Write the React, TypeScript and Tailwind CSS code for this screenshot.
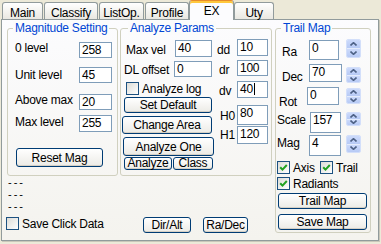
import type { ReactNode } from "react";

function Field({ value, className, caret }: { value: string; className: string; caret?: boolean }) {
  return (
    <div className={`flex items-start border border-[#7f9db9] bg-white pl-[2px] leading-[14px] shrink-0 ${className}`}>
      {value}
      {caret && <span className="ml-[1px] mt-[1px] w-px h-[12px] bg-black" />}
    </div>
  );
}

function Btn({ label, className }: { label: string; className: string }) {
  return (
    <button
      type="button"
      className={`flex items-center justify-center border border-[#003c74] rounded-[3px] bg-linear-to-b from-white to-[#ecebe6] shadow-[inset_0_-1px_0_#d6d0c5] shrink-0 whitespace-nowrap ${className}`}
    >
      {label}
    </button>
  );
}

function Check({ checked }: { checked?: boolean }) {
  return (
    <span className="flex items-center justify-center w-[13px] h-[13px] border border-[#1c5180] bg-linear-to-br from-[#dcdcd7] to-white shrink-0">
      {checked && (
        <svg width="9" height="9" viewBox="0 0 9 9">
          <path d="M1.2 4.2 L3.5 6.6 L7.8 2" stroke="#21a121" strokeWidth="2" fill="none" />
        </svg>
      )}
    </span>
  );
}

function Spin({ className }: { className: string }) {
  return (
    <div className={`w-[15px] flex flex-col rounded-[2px] overflow-hidden border border-[#d3dffa] shrink-0 ${className}`}>
      <div className="flex-1 flex items-center justify-center bg-linear-to-b from-[#ccdafb] to-[#b7caf5] border-b border-[#e4ecfc]">
        <svg width="7" height="4" viewBox="0 0 7 4">
          <path d="M0.5 3.5 L3.5 0.7 L6.5 3.5" stroke="#4d6185" strokeWidth="1.6" fill="none" />
        </svg>
      </div>
      <div className="flex-1 flex items-center justify-center bg-linear-to-b from-[#ccdafb] to-[#b7caf5]">
        <svg width="7" height="4" viewBox="0 0 7 4">
          <path d="M0.5 0.5 L3.5 3.3 L6.5 0.5" stroke="#4d6185" strokeWidth="1.6" fill="none" />
        </svg>
      </div>
    </div>
  );
}

function Group({ title, titleLeft, className, children }: { title: string; titleLeft: string; className: string; children: ReactNode }) {
  return (
    <div className={`relative border border-[#d0d0bf] rounded-[3px] ${className}`}>
      <span className={`absolute -top-[8px] ${titleLeft} px-[2px] bg-[#fbfbfb] text-[#0046d5] whitespace-nowrap`}>{title}</span>
      {children}
    </div>
  );
}

function Tab({ label, className }: { label: string; className: string }) {
  return (
    <div
      className={`flex justify-center pt-[3px] h-[17px] border-t border-l border-r border-[#919b9c] rounded-t-[3px] bg-linear-to-b from-white to-[#e9e8e1] ${className}`}
    >
      {label}
    </div>
  );
}

export default function App() {
  return (
    <div className="w-[381px] h-[244px] overflow-hidden bg-[#ece9d8] text-black text-[12px] leading-[14px] tracking-[-0.25px] font-['Liberation_Sans',Arial,sans-serif]">
      {/* tab strip */}
      <div className="flex items-end h-[19px]">
        <Tab label="Main" className="ml-[2px] w-[41px]" />
        <Tab label="Classify" className="ml-[1px] w-[54px]" />
        <Tab label="ListOp." className="ml-[1px] w-[45px]" />
        <Tab label="Profile" className="ml-[1px] w-[44px]" />
        <div className="relative z-10 flex justify-center pt-[3px] w-[45px] h-[20px] -mb-[1px] border-t border-l border-r border-t-[#e68b2c] border-[#919b9c] rounded-t-[3px] bg-[#fcfcfe] shadow-[inset_0_2px_0_#ffc83c]">
          EX
        </div>
        <Tab label="Uty" className="w-[40px]" />
      </div>

      {/* tab page */}
      <div className="ml-[1px] w-[378px] h-[222px] border border-[#919b9c] bg-linear-to-b from-[#fcfcfe] to-[#f4f3ee] shadow-[1px_1px_0_#c9c7ba] flex pl-[5px] pt-[8px]">
        {/* left column */}
        <div className="w-[111px] flex flex-col">
          <Group title="Magnitude Setting" titleLeft="left-[5px]" className="h-[148px] flex flex-col pl-[7px] pt-[13px]">
            <div className="flex items-start h-[16px]">
              <span className="w-[64px] -mt-[1px]">0 level</span>
              <Field value="258" className="w-[33px] h-[16px]" />
            </div>
            <div className="flex items-start h-[16px] mt-[9px]">
              <span className="w-[64px] mt-[1px]">Unit level</span>
              <Field value="45" className="w-[33px] h-[16px]" />
            </div>
            <div className="flex items-start h-[16px] mt-[11px]">
              <span className="w-[64px] -mt-[1px]">Above max</span>
              <Field value="20" className="w-[33px] h-[16px]" />
            </div>
            <div className="flex items-start h-[17px] mt-[5px]">
              <span className="w-[64px]">Max level</span>
              <Field value="255" className="w-[33px] h-[17px]" />
            </div>
            <Btn label="Reset Mag" className="mt-[16px] ml-[1px] w-[87px] h-[19px]" />
          </Group>
          <div className="pl-[1px] text-[11px] leading-[12px] tracking-[2px]">
            <div className="h-[12px]">---</div>
            <div className="h-[12px]">---</div>
            <div className="h-[12px]">---</div>
          </div>
          <div className="flex items-center h-[13px] mt-[5px] -ml-[1px]">
            <Check />
            <span className="ml-[3px] whitespace-nowrap">Save Click Data</span>
          </div>
        </div>

        {/* middle column */}
        <div className="ml-[2px] w-[152px] flex flex-col">
          <Group title="Analyze Params" titleLeft="left-[7px]" className="h-[148px] flex pl-[1px]">
            <div className="w-[92px] flex flex-col pt-[11px]">
              <div className="flex items-start h-[17px]">
                <span className="w-[53px] pl-[4px] mt-[3px]">Max vel</span>
                <Field value="40" className="w-[37px] h-[17px]" />
              </div>
              <div className="flex items-start h-[16px] mt-[4px]">
                <span className="w-[52px] pl-[2px] mt-[2px] whitespace-nowrap">DL offset</span>
                <Field value="0" className="w-[38px] h-[16px]" />
              </div>
              <div className="flex items-center h-[13px] mt-[5px] pl-[4px]">
                <Check />
                <span className="ml-[3px] whitespace-nowrap">Analyze log</span>
              </div>
              <Btn label="Set Default" className="mt-[2px] ml-[2px] w-[88px] h-[16px]" />
              <Btn label="Change Area" className="mt-[3px] w-[90px] h-[18px]" />
              <Btn label="Analyze One" className="mt-[3px] ml-[1px] w-[91px] h-[19px]" />
              <div className="flex mt-[1px]">
                <Btn label="Analyze" className="ml-[2px] w-[48px] h-[13px] leading-[11px]" />
                <Btn label="Class" className="ml-[1px] w-[40px] h-[13px] leading-[11px]" />
              </div>
            </div>
            <div className="w-[54px] flex flex-col pt-[10px]">
              <div className="flex items-start h-[17px]">
                <span className="w-[23px] pl-[3px] mt-[4px]">dd</span>
                <Field value="10" className="w-[31px] h-[17px]" />
              </div>
              <div className="flex items-start h-[16px] mt-[4px]">
                <span className="w-[23px] pl-[5px] mt-[3px]">dr</span>
                <Field value="100" className="w-[31px] h-[16px]" />
              </div>
              <div className="flex items-start h-[17px] mt-[5px]">
                <span className="w-[23px] pl-[5px] mt-[3px]">dv</span>
                <Field value="40" caret className="w-[31px] h-[17px]" />
              </div>
              <div className="flex items-start h-[20px] mt-[7px]">
                <span className="w-[23px] pl-[6px] mt-[4px]">H0</span>
                <Field value="80" className="w-[31px] h-[20px]" />
              </div>
              <div className="flex items-start h-[18px] mt-[1px]">
                <span className="w-[23px] pl-[6px] mt-[2px]">H1</span>
                <Field value="120" className="w-[31px] h-[18px]" />
              </div>
            </div>
          </Group>
          <div className="flex mt-[41px]">
            <Btn label="Dir/Alt" className="ml-[23px] w-[48px] h-[16px]" />
            <Btn label="Ra/Dec" className="ml-[12px] w-[45px] h-[16px]" />
          </div>
        </div>

        {/* right column */}
        <div className="ml-[3px] w-[96px] flex flex-col">
          <Group title="Trail Map" titleLeft="left-[5px]" className="h-[205px] flex flex-col pt-[11px]">
            <div className="flex items-start h-[20px]">
              <span className="w-[33px] pl-[6px] mt-[5px]">Ra</span>
              <Field value="0" className="w-[30px] h-[20px]" />
              <Spin className="ml-[7px] -mt-[1px] h-[19px]" />
            </div>
            <div className="flex items-start h-[18px] mt-[4px]">
              <span className="w-[33px] pl-[6px] mt-[6px]">Dec</span>
              <Field value="70" className="w-[33px] h-[18px]" />
              <Spin className="ml-[4px] mt-[3px] h-[16px]" />
            </div>
            <div className="flex items-start h-[18px] mt-[5px]">
              <span className="w-[31px] pl-[3px] mt-[8px]">Rot</span>
              <Field value="0" className="w-[32px] h-[18px]" />
              <Spin className="ml-[7px] mt-[1px] h-[16px]" />
            </div>
            <div className="flex items-start h-[21px] mt-[7px]">
              <span className="w-[34px] pl-[1px] mt-[1px]">Scale</span>
              <Field value="157" className="w-[31px] h-[21px]" />
              <Spin className="ml-[5px] h-[14px]" />
            </div>
            <div className="flex items-start h-[21px] mt-[2px]">
              <span className="w-[33px] pl-[1px] mt-[1px]">Mag</span>
              <Field value="4" className="w-[32px] h-[21px]" />
              <Spin className="ml-[5px] h-[18px]" />
            </div>
            <div className="flex items-center h-[13px] mt-[5px] pl-[1px]">
              <Check checked />
              <span className="ml-[3px] w-[27px]">Axis</span>
              <Check checked />
              <span className="ml-[3px]">Trail</span>
            </div>
            <div className="flex items-center h-[13px] mt-[3px] pl-[1px]">
              <Check checked />
              <span className="ml-[3px]">Radiants</span>
            </div>
            <Btn label="Trail Map" className="mt-[3px] ml-[2px] w-[89px] h-[16px]" />
            <Btn label="Save Map" className="mt-[5px] ml-[2px] w-[89px] h-[16px]" />
          </Group>
        </div>
      </div>
    </div>
  );
}
